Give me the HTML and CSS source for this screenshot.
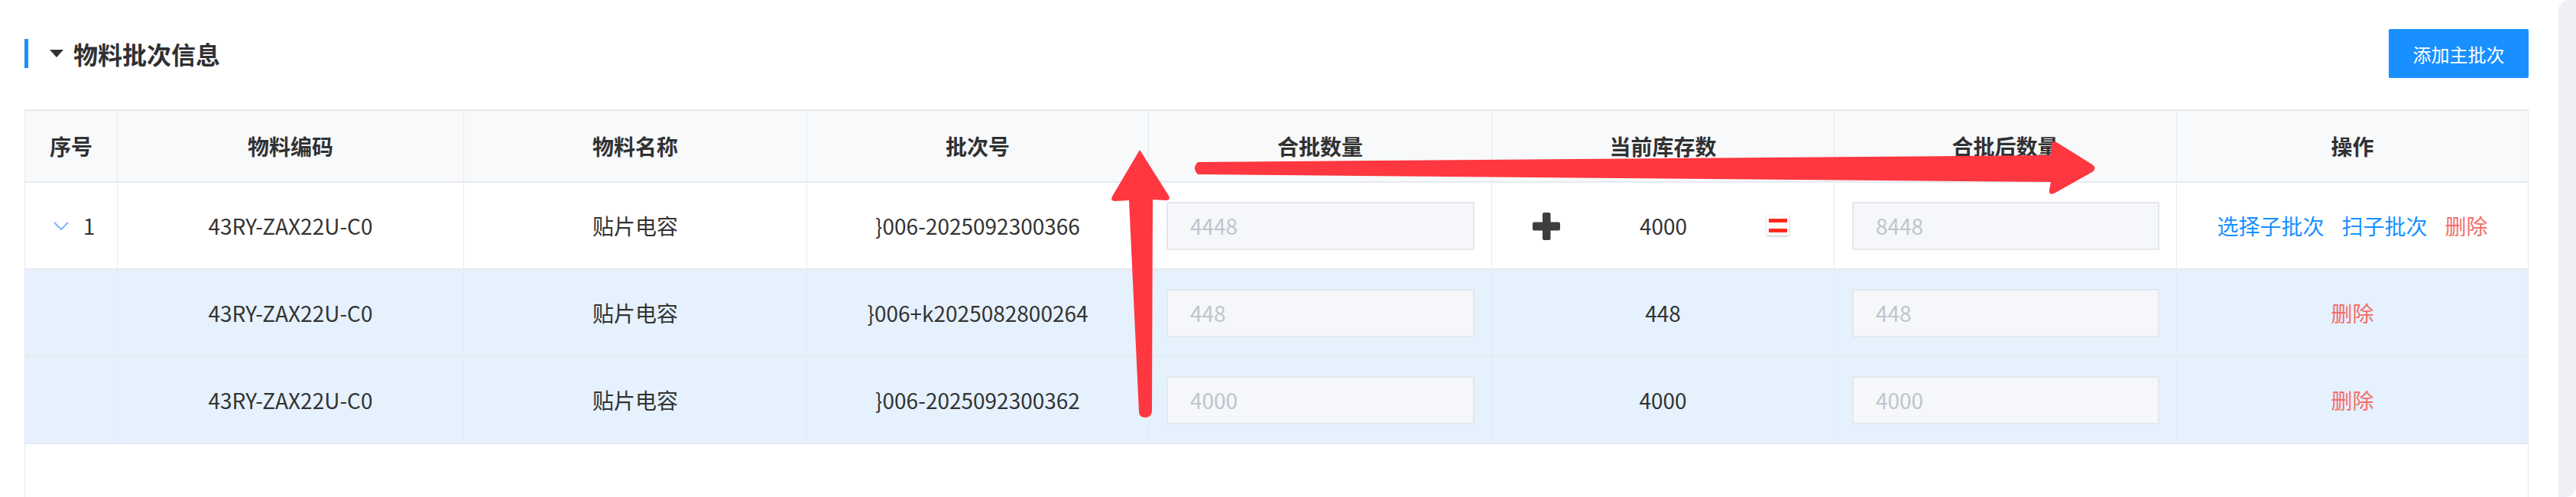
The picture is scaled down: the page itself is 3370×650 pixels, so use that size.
FILE: index.html
```html
<!DOCTYPE html>
<html lang="zh-CN">
<head>
<meta charset="utf-8">
<title>物料批次信息</title>
<link rel="stylesheet" href="styles.css">
</head>
<body>
<div class="page">
  <main class="card">
    <div class="section-head">
      <div class="title">
        <span class="title-bar"></span>
        <span class="caret"></span>
        <span class="title-text">物料批次信息</span>
      </div>
      <button class="btn-primary">添加主批次</button>
    </div>

    <div class="table-wrap">
      <div class="row head">
        <div class="cell">序号</div>
        <div class="cell">物料编码</div>
        <div class="cell">物料名称</div>
        <div class="cell">批次号</div>
        <div class="cell">合批数量</div>
        <div class="cell">当前库存数</div>
        <div class="cell">合批后数量</div>
        <div class="cell">操作</div>
      </div>

      <div class="row">
        <div class="cell idx">
          <svg class="chev" width="20" height="12" viewBox="0 0 20 12"><polyline points="1.5,1.5 10,10 18.5,1.5" fill="none" stroke="#8ab6f6" stroke-width="2.2" stroke-linecap="round" stroke-linejoin="round"/></svg>
          <span>1</span>
        </div>
        <div class="cell">43RY-ZAX22U-C0</div>
        <div class="cell">贴片电容</div>
        <div class="cell">}006-2025092300366</div>
        <div class="cell pad"><div class="input">4448</div></div>
        <div class="cell stock">
          <svg class="plus" width="36" height="36" viewBox="0 0 36 36"><rect x="0" y="12.5" width="36" height="11" rx="2" fill="#3d3d3d"/><rect x="13" y="0" width="10.5" height="36" rx="2" fill="#3d3d3d"/></svg>
          <span>4000</span>
          <span class="eq"><i></i><i></i></span>
        </div>
        <div class="cell pad"><div class="input">8448</div></div>
        <div class="cell actions">
          <a class="link">选择子批次</a>
          <a class="link">扫子批次</a>
          <a class="link danger">删除</a>
        </div>
      </div>

      <div class="row child">
        <div class="cell"></div>
        <div class="cell">43RY-ZAX22U-C0</div>
        <div class="cell">贴片电容</div>
        <div class="cell">}006+k2025082800264</div>
        <div class="cell pad"><div class="input">448</div></div>
        <div class="cell">448</div>
        <div class="cell pad"><div class="input">448</div></div>
        <div class="cell actions"><a class="link danger">删除</a></div>
      </div>

      <div class="row child">
        <div class="cell"></div>
        <div class="cell">43RY-ZAX22U-C0</div>
        <div class="cell">贴片电容</div>
        <div class="cell">}006-2025092300362</div>
        <div class="cell pad"><div class="input">4000</div></div>
        <div class="cell">4000</div>
        <div class="cell pad"><div class="input">4000</div></div>
        <div class="cell actions"><a class="link danger">删除</a></div>
      </div>
    </div>
  </main>
  <aside class="strip"></aside>
</div>

<svg class="annot" width="3370" height="650" viewBox="0 0 3370 650">
  <path d="M1491,196 L1529,256 Q1532,262 1525,262 L1508,261 L1507,538 Q1506,546 1498,546 Q1490,546 1490,538 L1477,262 L1459,263 Q1452,263 1455,257 Z" fill="#fe3740"/>
  <path d="M1567,212 L2683,203 L2683,192 Q2684,182 2692,187 L2737,215 Q2744,220 2737,225 L2689,252 Q2680,257 2681,248 L2683,238 L1567,228 Q1559,220 1567,212 Z" fill="#fe3740"/>
</svg>
</body>
</html>
```
FILE: styles.css
```css
html, body {
  margin: 0;
  padding: 0;
}
body {
  width: 3370px;
  height: 650px;
  overflow: hidden;
  position: relative;
  background: #ffffff;
  font-family: "Noto Sans CJK SC", "Noto Sans", sans-serif;
  color: #333333;
}
.page {
  display: flex;
  height: 650px;
}
.card {
  width: 3347px;
  box-sizing: border-box;
  padding: 38px 39px 0 32px;
  background: #ffffff;
}
.strip {
  flex: 1;
  background: #eff0f5;
  border-radius: 14px 0 14px 0;
}
.section-head {
  display: flex;
  align-items: center;
  justify-content: space-between;
  height: 64px;
}
.title {
  display: flex;
  align-items: center;
}
.title-bar {
  width: 5px;
  height: 38px;
  background: #1890ff;
  margin-right: 28px;
}
.caret {
  width: 0;
  height: 0;
  border-left: 9px solid transparent;
  border-right: 9px solid transparent;
  border-top: 10px solid #303133;
  margin-right: 13px;
}
.title-text {
  font-size: 32px;
  font-weight: 700;
  color: #303133;
  line-height: 40px;
}
.btn-primary {
  width: 183px;
  height: 64px;
  border: none;
  border-radius: 2px;
  background: #1890ff;
  color: #ffffff;
  font-family: inherit;
  font-size: 24px;
  padding: 0;
}
.table-wrap {
  margin-top: 41px;
  height: 507px;
  box-sizing: border-box;
  overflow: hidden;
  border: 1px solid #e6eaf0;
  border-top-width: 2px;
  border-bottom: none;
}
.row {
  display: grid;
  grid-template-columns: 121px 453px 449px 447px 449px 448px 448px 1fr;
  height: 114px;
  box-sizing: border-box;
  border-bottom: 2px solid #e6eaf0;
  font-size: 28px;
}
.row.head {
  height: 94px;
  background: #f8f9fa;
  font-weight: 700;
  color: #303133;
}
.row.child {
  background: #e5f1fd;
}
.cell {
  display: flex;
  align-items: center;
  justify-content: center;
  border-right: 1px solid #e6eaf0;
  white-space: nowrap;
}
.cell:last-child {
  border-right: none;
}
.cell.idx {
  gap: 19px;
  padding-left: 8px;
}
.chev {
  margin-top: 2px;
}
.cell.pad {
  padding: 0 22px 0 23px;
  justify-content: stretch;
}
.input {
  flex: 1;
  height: 63px;
  box-sizing: border-box;
  border: 2px solid #e4e7ed;
  border-radius: 2px;
  background: #f5f7fa;
  color: #c0c4cc;
  padding-left: 29px;
  display: flex;
  align-items: center;
}
.cell.stock {
  justify-content: space-between;
  padding: 0 58px 0 53px;
}
.plus {
  margin-top: 2px;
}
.eq {
  width: 30px;
  height: 26px;
  box-sizing: border-box;
  background: #ffffff;
  border-radius: 4px;
  box-shadow: 0 1px 3px rgba(0, 0, 0, 0.28);
  display: flex;
  flex-direction: column;
  justify-content: center;
  align-items: center;
  gap: 8px;
}
.eq i {
  display: block;
  width: 24px;
  height: 5px;
  background: #ff2a1c;
}
.cell.actions {
  gap: 23px;
}
.link {
  color: #1890ff;
  cursor: pointer;
}
.link.danger {
  color: #f56c6c;
}
.annot {
  position: absolute;
  left: 0;
  top: 0;
  pointer-events: none;
}
```
